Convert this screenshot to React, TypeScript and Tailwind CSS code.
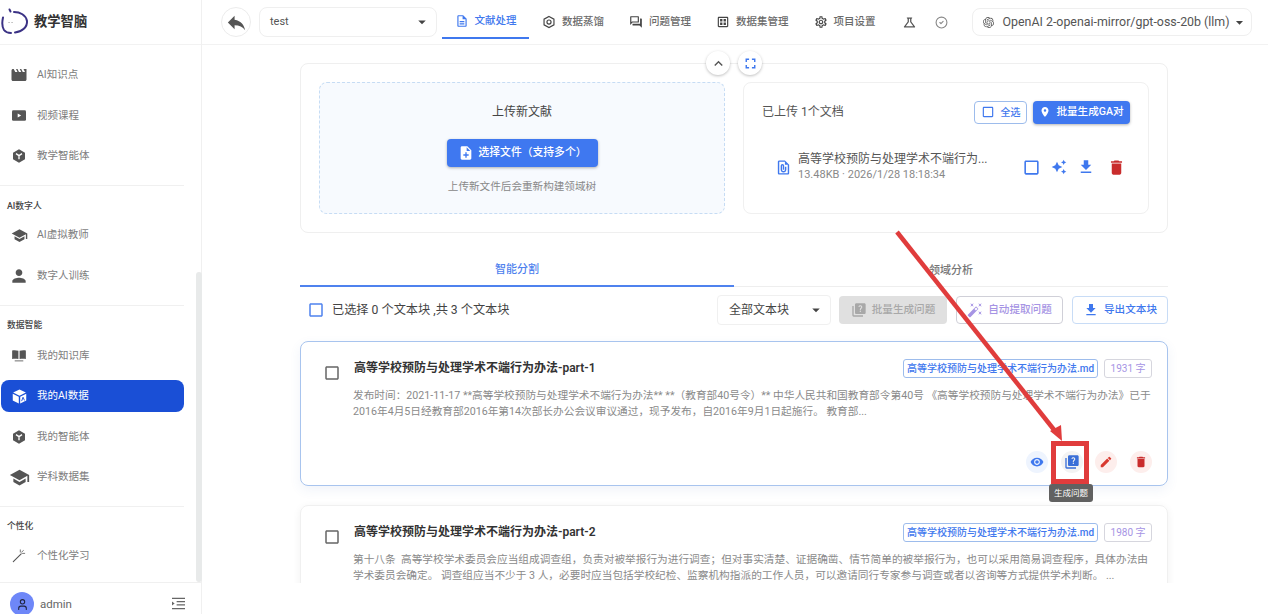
import type { ReactNode } from "react";
import {
  MdArrowDropDown,
  MdAutoAwesome,
  MdAutoFixHigh,
  MdCheckBoxOutlineBlank,
  MdDelete,
  MdEdit,
  MdExpandLess,
  MdFileDownload,
  MdFullscreen,
  MdMovie,
  MdNoteAdd,
  MdOutlineDataset,
  MdOutlineDescription,
  MdOutlineFilePresent,
  MdOutlineQuestionAnswer,
  MdOutlineScience,
  MdOutlineSettings,
  MdPerson,
  MdPlace,
  MdQuiz,
  MdReply,
  MdSchool,
  MdVisibility,
} from "react-icons/md";
import { LuCircleCheck, LuUser } from "react-icons/lu";
import { SiOpenai } from "react-icons/si";

const FONT = "font-['Roboto','Noto_Sans_CJK_SC',sans-serif]";

function HexIcon({ className }: { className?: string }) {
  return (
    <svg viewBox="0 0 24 24" className={className} fill="currentColor">
      <path d="M12 2 21 7v10l-9 5-9-5V7z" />
      <path d="M7.500 8.500 12 11.500l4.500-3M12 11.500V17" fill="none" stroke="#fff" strokeWidth="2" />
    </svg>
  );
}

function CubeIcon({ className }: { className?: string }) {
  return (
    <svg viewBox="0 0 24 24" className={className} fill="currentColor">
      <path d="M12 2 21 6.500 12 11 3 6.500z" />
      <path d="M2.500 8 11 12.300V22l-8.500-4.500z" />
      <path d="M13 12.300 21.500 8v9.500L13 22z" />
      <path d="M15 18.500 17 13l2 4.500" fill="none" stroke="#1a4fd6" strokeWidth="1.300" />
    </svg>
  );
}

function VideoIcon() {
  return (
    <svg viewBox="0 0 16 12" className="h-[11px] w-[14px]">
      <rect width="16" height="12" rx="1.500" fill="currentColor" />
      <path d="M6.500 3.800 10.500 6l-4 2.200z" fill="#fff" />
    </svg>
  );
}

function BookIcon() {
  return (
    <svg viewBox="0 0 16 14" className="h-[12px] w-[14px]" fill="currentColor">
      <path d="M0 0.500C2 0 5 0 7.300 1v9.500C5 10 2 10 0 10.500z" />
      <path d="M16 0.500C14 0 11 0 8.700 1v9.500c2.300-.5 5.300-.5 7.300 0z" />
      <path d="M3 12.700h10" stroke="currentColor" strokeWidth="1" />
    </svg>
  );
}

function WandIcon() {
  return (
    <svg viewBox="0 0 16 16" className="h-[14px] w-[14px]" fill="none" stroke="currentColor" strokeLinecap="round">
      <path d="M1.500 14.500 10.500 5.500" strokeWidth="1.300" />
      <path d="M9.500 1v2.500M12 5h2.500M11 3.500 13 1.800" strokeWidth="0.900" />
    </svg>
  );
}

function HexOutline() {
  return (
    <svg viewBox="0 0 24 24" className="h-[14px] w-[14px]" fill="none" stroke="currentColor" strokeWidth="2">
      <path d="M12 2.500 20.500 7.200v9.600L12 21.500l-8.500-4.700V7.200z" />
      <circle cx="12" cy="12" r="3.500" />
    </svg>
  );
}

function SideItem({ icon, label, active }: { icon: ReactNode; label: string; active?: boolean }) {
  return (
    <div className="flex h-[40.500px] items-center pl-px">
      <div
        className={
          active
            ? "flex h-[32px] w-[183px] items-center rounded-lg bg-[#1a4fd6] text-white"
            : "flex h-[32px] w-[183px] items-center text-[#7d7d7d]"
        }
      >
        <span className={active ? "flex w-[36px] justify-center text-white" : "flex w-[36px] justify-center text-[#555]"}>
          {icon}
        </span>
        <span className="text-[10.500px]">{label}</span>
      </div>
    </div>
  );
}

function SectionLabel({ children, className }: { children: string; className?: string }) {
  return (
    <div className={`flex h-[20px] items-center pl-[7px] text-[8.800px] font-medium text-[#444] ${className ?? ""}`}>
      {children}
    </div>
  );
}

function Sidebar() {
  return (
    <aside className="relative flex h-[614px] w-[202px] shrink-0 flex-col border-r border-[#f0f0f0]">
      <div className="flex h-[45px] shrink-0 items-center border-b border-[#f2f2f2]">
        <svg viewBox="0 0 28 28" className="ml-px h-[28px] w-[28px]" fill="none" stroke="#3b3285" strokeWidth="2" strokeLinecap="round">
          <path d="M2 9.500C1 14 1 19 3 22c1.500 2 4 3 7 3" />
          <path d="M13 4c6 0 12 3 13 9 .5 6-5 11-12 11.500" />
          <path d="M8.500 1.500 9.500 3.500" />
          <path d="M8 14.500h.1M11 14.500h.1" stroke="#888" strokeWidth="1" />
        </svg>
        <span className="ml-[5px] text-[13.300px] font-bold text-[#333]">教学智脑</span>
      </div>
      <nav className="flex-1 pt-[10px]">
        <SideItem icon={<MdMovie size={18} />} label="AI知识点" />
        <SideItem icon={<VideoIcon />} label="视频课程" />
        <SideItem icon={<HexIcon className="h-[16px] w-[16px]" />} label="教学智能体" />
        <div className="mb-[9px] mt-[8.500px] h-px w-[184px] bg-[#f0f0f0]" />
        <SectionLabel className="pt-[4px]">AI数字人</SectionLabel>
        <SideItem icon={<MdSchool size={17} />} label="AI虚拟教师" />
        <SideItem icon={<MdPerson size={20} />} label="数字人训练" />
        <div className="mb-[10px] mt-[8.500px] h-px w-[184px] bg-[#f0f0f0]" />
        <SectionLabel>数据智能</SectionLabel>
        <SideItem icon={<BookIcon />} label="我的知识库" />
        <SideItem active icon={<CubeIcon className="h-[17px] w-[17px]" />} label="我的AI数据" />
        <SideItem icon={<HexIcon className="h-[16px] w-[16px]" />} label="我的智能体" />
        <SideItem icon={<MdSchool size={21} />} label="学科数据集" />
        <div className="mb-[9px] mt-[8.500px] h-px w-[184px] bg-[#f0f0f0]" />
        <SectionLabel className="pt-[2px]">个性化</SectionLabel>
        <SideItem icon={<WandIcon />} label="个性化学习" />
      </nav>
      <div className="flex h-[32px] shrink-0 items-start overflow-hidden border-t border-[#f0f0f0] pl-[10px] pr-[15px] pt-[9px]">
        <span className="flex h-[24px] w-[24px] shrink-0 items-center justify-center rounded-full bg-[#6e87f8] text-[#1f2440]">
          <LuUser size={13} />
        </span>
        <span className="ml-[6px] mt-[3px] flex-1 text-[11.500px] leading-[18px] text-[#666]">admin</span>
        <svg viewBox="0 0 16 14" className="mt-[5px] h-[13px] w-[15px]" fill="none" stroke="#666" strokeWidth="1.200">
          <path d="M1 1.500h14M6 5h9M6 8.500h9M1 12.500h14" />
          <path d="M1 4.800 3.800 7 1 9.200z" fill="#666" stroke="none" />
        </svg>
      </div>
      <div className="absolute left-[196px] top-[272px] h-[310px] w-[6px] rounded-full bg-[#e8eaea]" />
    </aside>
  );
}

function TopTab({ icon, label, active }: { icon: ReactNode; label: string; active?: boolean }) {
  return (
    <div
      className={
        active
          ? "flex h-[39px] w-[87px] items-center justify-center gap-[6px] border-b-2 border-[#3f78ee] pt-[5px] text-[#3f78ee]"
          : "flex h-[39px] items-center gap-[6px] pt-[5px] text-[#6b6b6b]"
      }
    >
      <span className={active ? "text-[#3f78ee]" : "text-[#444]"}>{icon}</span>
      <span className="text-[10.500px] font-medium">{label}</span>
    </div>
  );
}

function TopBar() {
  return (
    <header className="flex h-[45px] shrink-0 items-center border-b border-[#f2f2f2] pl-[19px]">
      <span className="flex h-[30px] w-[30px] items-center justify-center rounded-full border border-[#ececec] text-[#555]">
        <MdReply size={23} />
      </span>
      <div className="ml-[8px] flex h-[30px] w-[178px] items-center justify-between rounded-lg border border-[#efefef] pl-[10px] pr-[5px] text-[11px] text-[#555]">
        test
        <MdArrowDropDown size={18} className="text-[#444]" />
      </div>
      <div className="ml-[5px] self-start">
        <TopTab active icon={<MdOutlineDescription size={14} />} label="文献处理" />
      </div>
      <div className="ml-[13px] flex gap-[25px] self-start">
        <TopTab icon={<HexOutline />} label="数据蒸馏" />
        <TopTab icon={<MdOutlineQuestionAnswer size={14} />} label="问题管理" />
        <TopTab icon={<MdOutlineDataset size={14} />} label="数据集管理" />
        <TopTab icon={<MdOutlineSettings size={14} />} label="项目设置" />
      </div>
      <MdOutlineScience size={15} className="ml-[26px] text-[#555]" />
      <LuCircleCheck size={13} className="ml-[18px] text-[#888]" />
      <div className="ml-[24px] flex h-[28px] w-[280px] shrink-0 items-center rounded-lg border border-[#efefef] pl-[10px] text-[#555]">
        <SiOpenai size={11} />
        <span className="ml-[9px] whitespace-nowrap text-[12.400px]">OpenAI 2-openai-mirror/gpt-oss-20b (llm)</span>
        <MdArrowDropDown size={17} className="ml-px text-[#444]" />
      </div>
    </header>
  );
}

function UploadPanel() {
  return (
    <section className="flex h-[170px] gap-[18px] rounded-lg border border-[#efefef] p-[18px]">
      <div className="flex w-[406px] flex-col items-center rounded-lg border border-dashed border-[#c6dcf4] bg-[#f7fafe] pt-[20px]">
        <div className="text-[12px] leading-[18px] text-[#444]">上传新文献</div>
        <button className="mt-[18px] flex h-[28px] w-[151px] items-center justify-center gap-[5px] rounded bg-[#3f78f0] text-[10.800px] font-medium text-white shadow-[0_1px_3px_rgba(0,0,0,0.3)]">
          <MdNoteAdd size={16} />
          选择文件（支持多个）
        </button>
        <div className="mt-[12px] text-[10.600px] text-[#888]">上传新文件后会重新构建领域树</div>
      </div>
      <div className="w-[406px] rounded-lg border border-[#f0f0f0] px-[18px] pt-[17px]">
        <div className="flex h-[24px] items-center justify-between">
          <span className="text-[12px] text-[#555]">已上传 1个文档</span>
          <div className="flex gap-[6px]">
            <button className="flex h-[23px] w-[53px] items-center justify-center gap-[6px] rounded border border-[#9dbcec] text-[10px] font-medium text-[#3f78ee]">
              <MdCheckBoxOutlineBlank size={14} />
              全选
            </button>
            <button className="flex h-[23px] w-[97px] items-center justify-center gap-[5px] rounded bg-[#3f78f0] text-[10.600px] font-medium text-white shadow-[0_1px_3px_rgba(0,0,0,0.3)]">
              <MdPlace size={12} />
              批量生成GA对
            </button>
          </div>
        </div>
        <div className="mt-[27px] flex items-center pl-[13px]">
          <MdOutlineFilePresent size={17} className="shrink-0 text-[#3f78ee]" />
          <div className="ml-[6px] w-[220px] shrink-0">
            <div className="text-[12px] leading-[16px] text-[#555]">高等学校预防与处理学术不端行为...</div>
            <div className="text-[11px] leading-[16px] text-[#888]">13.48KB · 2026/1/28 18:18:34</div>
          </div>
          <div className="ml-[4px] flex items-center gap-[10px] text-[#3f78ee]">
            <MdCheckBoxOutlineBlank size={19} />
            <MdAutoAwesome size={16} />
            <MdFileDownload size={18} />
            <MdDelete size={19} className="ml-[2px] text-[#c92c2c]" />
          </div>
        </div>
      </div>
    </section>
  );
}

function Tabs() {
  return (
    <div className="mt-[17px] flex h-[37px] text-[11px]">
      <div className="flex w-[434px] items-center justify-center border-b-2 border-[#4f82ee] pt-[6px] font-medium text-[#4f82ee]">智能分割</div>
      <div className="flex flex-1 items-center justify-center border-b border-[#eeeeee] pt-[6px] font-medium text-[#777]">领域分析</div>
    </div>
  );
}

function Toolbar() {
  return (
    <div className="mt-[8px] flex h-[30px] items-center">
      <MdCheckBoxOutlineBlank size={18} className="ml-[7px] text-[#4f82ee]" />
      <span className="ml-[7px] flex-1 text-[12.200px] text-[#444]">已选择 0 个文本块 ,共 3 个文本块</span>
      <div className="flex h-[30px] w-[114px] items-center justify-between rounded border border-[#f0f0f0] pl-[11px] pr-[5px] text-[12px] text-[#444]">
        全部文本块
        <MdArrowDropDown size={18} />
      </div>
      <button className="ml-[8px] flex h-[28px] w-[108px] items-center justify-center gap-[5px] rounded bg-[#e0e0e0] text-[10.600px] font-medium text-[#a8a8a8]">
        <MdQuiz size={16} />
        批量生成问题
      </button>
      <button className="ml-[9px] flex h-[28px] w-[107px] items-center justify-center gap-[5px] rounded border border-[#d0d0d8] text-[10.600px] font-medium text-[#a694e4]">
        <MdAutoFixHigh size={16} />
        自动提取问题
      </button>
      <button className="ml-[9px] flex h-[28px] w-[96px] items-center justify-center gap-[5px] rounded border border-[#c8dcf6] text-[10.600px] font-medium text-[#3f78ee]">
        <MdFileDownload size={16} />
        导出文本块
      </button>
    </div>
  );
}

function RoundAction({ bg, children }: { bg: string; children: ReactNode }) {
  return <span className={`flex h-[22px] w-[22px] items-center justify-center rounded-full ${bg}`}>{children}</span>;
}

function ChunkCard({
  title,
  count,
  body,
  focused,
}: {
  title: string;
  count: string;
  body: string;
  focused?: boolean;
}) {
  return (
    <article
      className={
        focused
          ? "flex h-[145px] flex-col rounded-lg border border-[#a8c4ee] pl-[22px] pr-[15px] pt-[16.500px] shadow-[0_4px_12px_rgba(60,100,180,0.08)]"
          : "flex h-[145px] flex-col rounded-lg border border-[#f0f0f0] pl-[22px] pr-[15px] pt-[16.500px] shadow-[0_2px_8px_rgba(0,0,0,0.06)]"
      }
    >
      <div className="flex">
        <MdCheckBoxOutlineBlank size={18} className="mt-[5px] shrink-0 text-[#666]" />
        <div className="ml-[12px] min-w-0 flex-1">
          <div className="flex h-[19px] items-center justify-between">
            <h3 className="pl-px text-[12px] font-semibold text-[#333]">{title}</h3>
            <div className="flex gap-[6px]">
              <span className="flex h-[19px] w-[195px] items-center justify-center whitespace-nowrap rounded-[3px] border border-[#9dbcec] text-[10px] font-medium text-[#3f78ee]">
                高等学校预防与处理学术不端行为办法.md
              </span>
              <span className="flex h-[19px] w-[48px] items-center justify-center whitespace-nowrap rounded-[3px] border border-[#d6d6de] text-[10px] text-[#a694e4]">
                {count} 字
              </span>
            </div>
          </div>
          <p className="mt-[10px] whitespace-pre-wrap text-[10.680px] leading-[16px] text-[#8a8a8a]">{body}</p>
        </div>
      </div>
    </article>
  );
}

export default function App() {
  return (
    <div className={`relative flex h-[614px] w-[1268px] overflow-hidden bg-white ${FONT}`}>
      <Sidebar />
      <main className="flex min-w-0 flex-1 flex-col">
        <TopBar />
        <div className="relative h-[538px] overflow-hidden pl-[98px] pr-[100px] pt-[18px]">
          <UploadPanel />
          <Tabs />
          <Toolbar />
          <div className="mt-[16px] flex flex-col gap-[19px]">
            <ChunkCard
              focused
              title="高等学校预防与处理学术不端行为办法-part-1"
              count="1931"
              body="发布时间：2021-11-17 **高等学校预防与处理学术不端行为办法** **（教育部40号令）** 中华人民共和国教育部令第40号 《高等学校预防与处理学术不端行为办法》已于 2016年4月5日经教育部2016年第14次部长办公会议审议通过，现予发布，自2016年9月1日起施行。 教育部..."
            />
            <ChunkCard
              title="高等学校预防与处理学术不端行为办法-part-2"
              count="1980"
              body="第十八条  高等学校学术委员会应当组成调查组，负责对被举报行为进行调查；但对事实清楚、证据确凿、情节简单的被举报行为，也可以采用简易调查程序，具体办法由学术委员会确定。 调查组应当不少于 3 人，必要时应当包括学校纪检、监察机构指派的工作人员，可以邀请同行专家参与调查或者以咨询等方式提供学术判断。 ..."
            />
          </div>
        </div>
      </main>

      {/* collapse + fullscreen floating over the upload panel */}
      <span className="absolute left-[706px] top-[51px] flex h-[24px] w-[24px] items-center justify-center rounded-full bg-white text-[#555] shadow-[0_1px_3px_rgba(0,0,0,0.25)]">
        <MdExpandLess size={17} />
      </span>
      <span className="absolute left-[738px] top-[51px] flex h-[24px] w-[24px] items-center justify-center rounded-full bg-white text-[#3f78ee] shadow-[0_1px_3px_rgba(0,0,0,0.25)]">
        <MdFullscreen size={17} />
      </span>

      {/* card actions, sit at the bottom right of the focused card */}
      <div className="absolute left-[1026px] top-[451px] flex gap-[12.500px]">
        <RoundAction bg="bg-[#eef4fe]">
          <MdVisibility size={14} className="text-[#3f78ee]" />
        </RoundAction>
        <RoundAction bg="bg-[#f3f3f3]">
          <MdQuiz size={16} className="text-[#3a6fd8]" />
        </RoundAction>
        <RoundAction bg="bg-[#fdeeec]">
          <MdEdit size={14} className="text-[#d8392f]" />
        </RoundAction>
        <RoundAction bg="bg-[#fdeeec]">
          <MdDelete size={14} className="text-[#c92c2c]" />
        </RoundAction>
      </div>

      {/* annotation drawn on top of the screenshot */}
      <svg className="pointer-events-none absolute left-0 top-0 h-[614px] w-[1268px]" viewBox="0 0 1268 614" fill="none">
        <path d="M897 232 1055 431" stroke="#e03c3c" strokeWidth="4.500" />
        <path d="M1062 441 1050 431 1061 425z" fill="#e03c3c" />
        <rect x="1053.500" y="443.500" width="33" height="38" stroke="#e03c3c" strokeWidth="5" />
      </svg>
      <div className="absolute left-[1049px] top-[484px] flex h-[18px] w-[44px] items-center justify-center rounded-[3px] bg-[#616161] text-[8.500px] text-white">
        生成问题
      </div>
    </div>
  );
}
